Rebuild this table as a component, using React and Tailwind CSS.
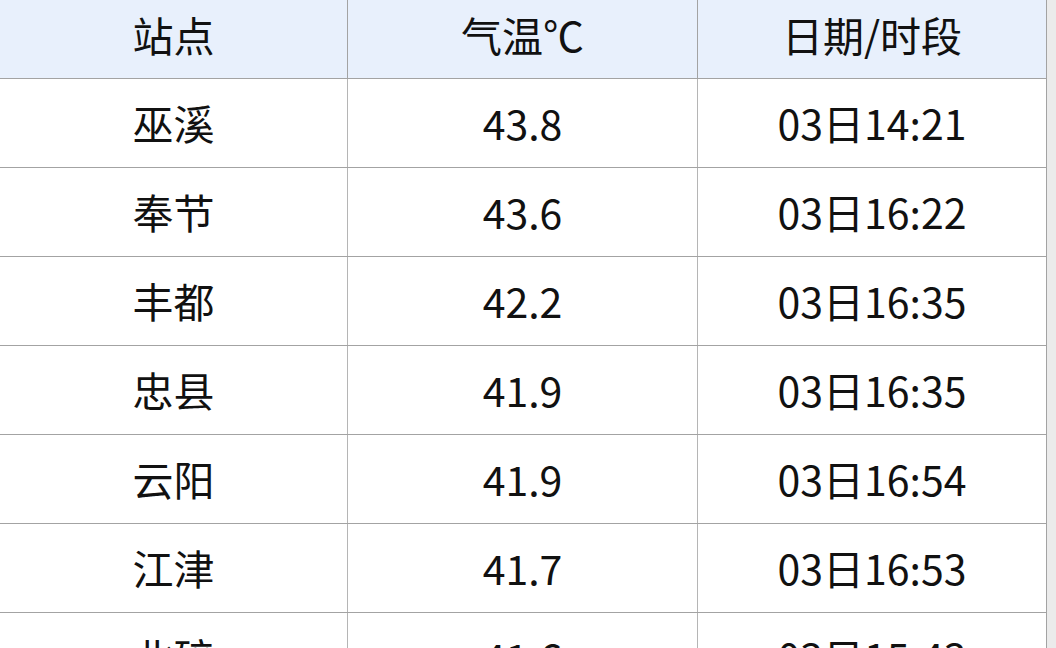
import React from "react";

const rows = [
  { site: "巫溪", temp: "43.8", time: "03日14:21" },
  { site: "奉节", temp: "43.6", time: "03日16:22" },
  { site: "丰都", temp: "42.2", time: "03日16:35" },
  { site: "忠县", temp: "41.9", time: "03日16:35" },
  { site: "云阳", temp: "41.9", time: "03日16:54" },
  { site: "江津", temp: "41.7", time: "03日16:53" },
  { site: "北碚", temp: "41.6", time: "03日15:43" },
];

const App = () => {
  return (
    <div
      className="flex w-[1056px] h-[648px] overflow-hidden bg-white text-[#111]"
      style={{ fontFamily: '"Noto Sans CJK SC", "Noto Sans", sans-serif' }}
    >
      <div className="w-[1047px] shrink-0">
        <div className="grid grid-cols-[348px_350px_349px] h-[79px] bg-[#e8f0fc] border-b border-[#a3a3a3] text-[41px] leading-none">
          <div className="flex items-center justify-center border-r border-[#a3a3a3] pb-[10px]">站点</div>
          <div className="flex items-center justify-center border-r border-[#a3a3a3] pb-[10px]">气温℃</div>
          <div className="flex items-center justify-center border-r border-[#a3a3a3] pb-[10px]">日期/时段</div>
        </div>
        {rows.map((row, index) => (
          <div
            key={index}
            className="grid grid-cols-[348px_350px_349px] h-[89px] border-b border-[#a3a3a3] text-[41px] leading-none"
          >
            <div className="flex items-center justify-center border-r border-[#b5b5b5] pb-[1px]">{row.site}</div>
            <div className="flex items-center justify-center border-r border-[#b5b5b5] pb-[1px]">{row.temp}</div>
            <div className="flex items-center justify-center border-r border-[#a3a3a3] pb-[1px]">{row.time}</div>
          </div>
        ))}
      </div>
      <div className="flex-1 bg-[#ebebeb]"></div>
    </div>
  );
};

export default App;
